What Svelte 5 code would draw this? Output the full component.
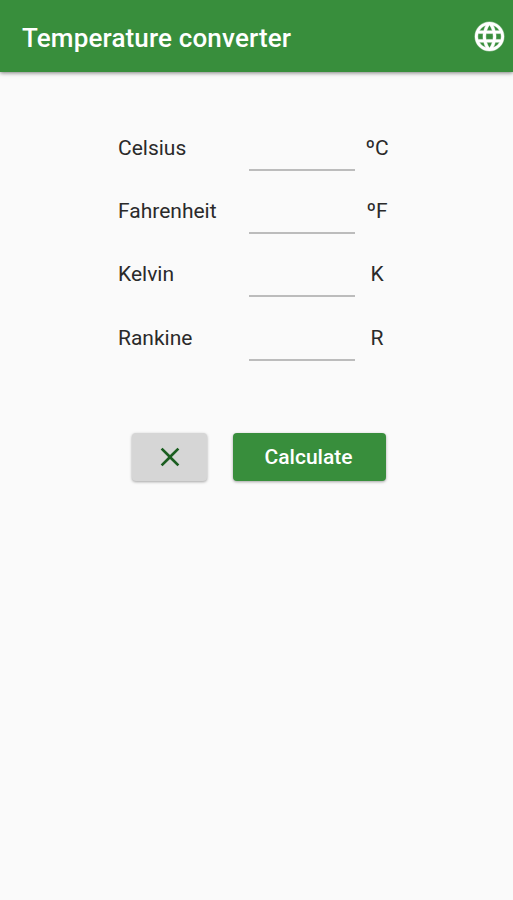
<script>
  const rows = [
    { name: 'Celsius', unit: 'ºC' },
    { name: 'Fahrenheit', unit: 'ºF' },
    { name: 'Kelvin', unit: 'K' },
    { name: 'Rankine', unit: 'R' }
  ];
  let values = $state(['', '', '', '']);
  const clear = () => (values = ['', '', '', '']);
</script>

<div class="app">
  <header>
    <h1>Temperature converter</h1>
    <button class="lang" aria-label="Language">
      <svg viewBox="0 0 24 24" width="35" height="35"><path fill="#fff" stroke="#fff" stroke-width=".3" d="M11.99 2C6.47 2 2 6.48 2 12s4.47 10 9.99 10C17.52 22 22 17.52 22 12S17.52 2 11.99 2zm6.93 6h-2.95c-.32-1.25-.78-2.45-1.38-3.56 1.84.63 3.37 1.91 4.33 3.56zM12 4.04c.83 1.2 1.48 2.53 1.91 3.96h-3.82c.43-1.43 1.08-2.76 1.91-3.96zM4.26 14C4.1 13.36 4 12.69 4 12s.1-1.36.26-2h3.38c-.08.66-.14 1.32-.14 2s.06 1.34.14 2H4.26zm.82 2h2.95c.32 1.25.78 2.45 1.38 3.56-1.84-.63-3.37-1.9-4.33-3.56zm2.95-8H5.08c.96-1.66 2.49-2.93 4.33-3.56C8.81 5.55 8.35 6.75 8.03 8zM12 19.96c-.83-1.2-1.48-2.53-1.91-3.96h3.82c-.43 1.43-1.08 2.76-1.91 3.96zM14.34 14H9.66c-.09-.66-.16-1.32-.16-2s.07-1.35.16-2h4.68c.09.65.16 1.32.16 2s-.07 1.34-.16 2zm.25 5.56c.6-1.11 1.06-2.31 1.38-3.56h2.95c-.96 1.65-2.49 2.93-4.33 3.56zM16.36 14c.08-.66.14-1.32.14-2s-.06-1.34-.14-2h3.38c.16.64.26 1.31.26 2s-.1 1.36-.26 2h-3.38z" /></svg>
    </button>
  </header>
  <main>
    {#each rows as row, i}
      <label class="row">
        <span class="name">{row.name}</span>
        <input bind:value={values[i]} inputmode="decimal" />
        <span class="unit">{row.unit}</span>
      </label>
    {/each}
  </main>
  <div class="actions">
    <button class="clear" aria-label="Clear" onclick={clear}>
      <svg viewBox="0 0 24 24" width="32" height="32"><path fill="#1b5e20" d="M19 6.41L17.59 5 12 10.59 6.41 5 5 6.41 10.59 12 5 17.59 6.41 19 12 13.41 17.59 19 19 17.59 13.41 12z" /></svg>
    </button>
    <button class="calc">Calculate</button>
  </div>
</div>

<style>
  :global(body) { margin: 0; background: #fafafa; }
  .app { min-height: 900px; background: #fafafa; font-family: Roboto, sans-serif; color: #2a2a2a; }
  header {
    height: 72px; box-sizing: border-box; padding: 0 6px 0 22px;
    display: flex; align-items: center; justify-content: space-between;
    background: #388e3c; box-shadow: 0 1px 4px rgba(0, 0, 0, 0.5);
  }
  h1 { margin: 3px 0 0; font-size: 26px; line-height: 32px; font-weight: 500; letter-spacing: 0.15px; color: #fff; white-space: nowrap; }
  button { border: 0; padding: 0; font-family: inherit; display: flex; align-items: center; justify-content: center; }
  .lang { background: none; }
  main { padding: 44px 0 0 118px; }
  .row { height: 63.3px; display: flex; align-items: center; }
  .name { width: 131px; font-size: 21px; }
  input {
    width: 106px; height: 46px; box-sizing: border-box; padding: 0; border: 0; border-bottom: 2px solid #bcbcbc;
    background: none; outline: 0; font: inherit; font-size: 21px; color: inherit; border-radius: 0;
  }
  .unit { width: 44px; text-align: center; font-size: 21px; }
  .actions { display: flex; gap: 26px; padding: 64px 0 0 132px; }
  .clear, .calc { height: 48px; border-radius: 4px; box-shadow: 0 1px 3px rgba(0, 0, 0, 0.35); }
  .clear { width: 75px; background: #d6d6d6; }
  .calc { width: 153px; padding-right: 2px; box-sizing: border-box; background: #388e3c; color: #fff; font-size: 21px; font-weight: 500; }
</style>
